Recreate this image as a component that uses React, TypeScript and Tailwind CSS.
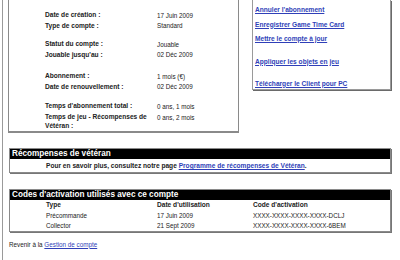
import type { ReactNode } from 'react';

const rowGroups: { label: ReactNode; value: string }[][] = [
    [
        { label: 'Date de création :', value: '17 Juin 2009' },
        { label: 'Type de compte :', value: 'Standard' },
    ],
    [
        { label: 'Statut du compte :', value: 'Jouable' },
        { label: "Jouable jusqu'au :", value: '02 Déc 2009' },
    ],
    [
        { label: 'Abonnement :', value: '1 mois (€)' },
        { label: 'Date de renouvellement :', value: '02 Déc 2009' },
    ],
];

const groupGaps = ['mt-[10px]', 'mt-[8px]', 'mt-[11px]'];

const codes = [
    { type: 'Précommande', date: '17 Juin 2009', code: 'XXXX-XXXX-XXXX-XXXX-DCLJ' },
    { type: 'Collector', date: '21 Sept 2009', code: 'XXXX-XXXX-XXXX-XXXX-6BEM' },
];

const linkCls = 'text-[#2f3fb8] underline underline-offset-[1px]';

function SectionBar({ children }: { children: ReactNode }) {
    return (
        <div className="h-[10px] bg-black pl-[2px] text-[8.2px] font-bold leading-[10px] text-white">
            {children}
        </div>
    );
}

export default function App() {
    return (
        <div className="h-[260px] w-[400px] overflow-hidden bg-white font-['Liberation_Sans',Arial,sans-serif] text-[#222]">
            <div className="ml-[2px] h-full border-l border-[#9a9a9a] pl-[5px] pr-[9px]">
                {/* haut : infos compte + liens */}
                <div className="flex items-start">
                    <div className="w-[231px] border-x border-b-2 border-x-[#8a8a8a] border-b-[#8a8a8a] pl-[36px]">
                        {rowGroups.map((group, gi) => (
                            <div key={gi} className={groupGaps[gi]}>
                                {group.map(r => (
                                    <div key={r.value + gi} className="flex h-[10.5px] items-center">
                                        <span className="w-[112px] text-[6.6px] font-bold">{r.label}</span>
                                        <span className="text-[6.3px]">{r.value}</span>
                                    </div>
                                ))}
                            </div>
                        ))}
                        <div className="mt-[9px]">
                            <div className="flex h-[10.5px] items-center">
                                <span className="w-[112px] text-[6.6px] font-bold">Temps d'abonnement total :</span>
                                <span className="text-[6.3px]">0 ans, 1 mois</span>
                            </div>
                            <div className="flex items-start">
                                <span className="w-[112px] text-[6.6px] leading-[9.7px] font-bold">
                                    Temps de jeu - Récompenses de<br />Vétéran :
                                </span>
                                <span className="pt-[1px] text-[6.3px] leading-[9.7px]">0 ans, 2 mois</span>
                            </div>
                        </div>
                    </div>

                    <div className="ml-[13px] flex h-[90px] w-[139px] flex-col border-x border-b border-[#9a9a9a] pl-[2px] shadow-[1px_1px_0_#6a6a6a] text-[6.6px] font-bold leading-[10px]">
                        <a className={`${linkCls} mt-[5px]`}>Annuler l'abonnement</a>
                        <a className={`${linkCls} mt-[4.5px]`}>Enregistrer Game Time Card</a>
                        <a className={`${linkCls} mt-[4px]`}>Mettre le compte à jour</a>
                        <a className={`${linkCls} mt-[13px]`}>Appliquer les objets en jeu</a>
                        <a className={`${linkCls} mt-[12px]`}>Télécharger le Client pour PC</a>
                    </div>
                </div>

                {/* récompenses */}
                <div className="ml-[1px] mt-[15px] border border-[#8a8a8a] shadow-[1px_1px_0_#777]">
                    <SectionBar>Récompenses de vétéran</SectionBar>
                    <div className="h-[13px] pl-[36px] text-[6.6px] font-bold leading-[13px]">
                        Pour en savoir plus, consultez notre page{' '}
                        <a className={linkCls}>Programme de récompenses de Vétéran</a>.
                    </div>
                </div>

                {/* codes */}
                <div className="ml-[1px] mt-[16px] border border-[#8a8a8a] shadow-[1px_1px_0_#777]">
                    <SectionBar>Codes d'activation utilisés avec ce compte</SectionBar>
                    <div className="pl-[36px] text-[6.3px]">
                        <div className="flex h-[10.3px] items-center text-[6.6px] font-bold">
                            <span className="w-[111px]">Type</span>
                            <span className="w-[96px]">Date d'utilisation</span>
                            <span>Code d'activation</span>
                        </div>
                        {codes.map(c => (
                            <div key={c.code} className="flex h-[10.3px] items-center">
                                <span className="w-[111px]">{c.type}</span>
                                <span className="w-[96px]">{c.date}</span>
                                <span>{c.code}</span>
                            </div>
                        ))}
                    </div>
                </div>

                <div className="ml-[1px] mt-[8px] text-[6.3px] leading-[10px]">
                    Revenir à la <a className={linkCls}>Gestion de compte</a>
                </div>
            </div>
        </div>
    );
}
